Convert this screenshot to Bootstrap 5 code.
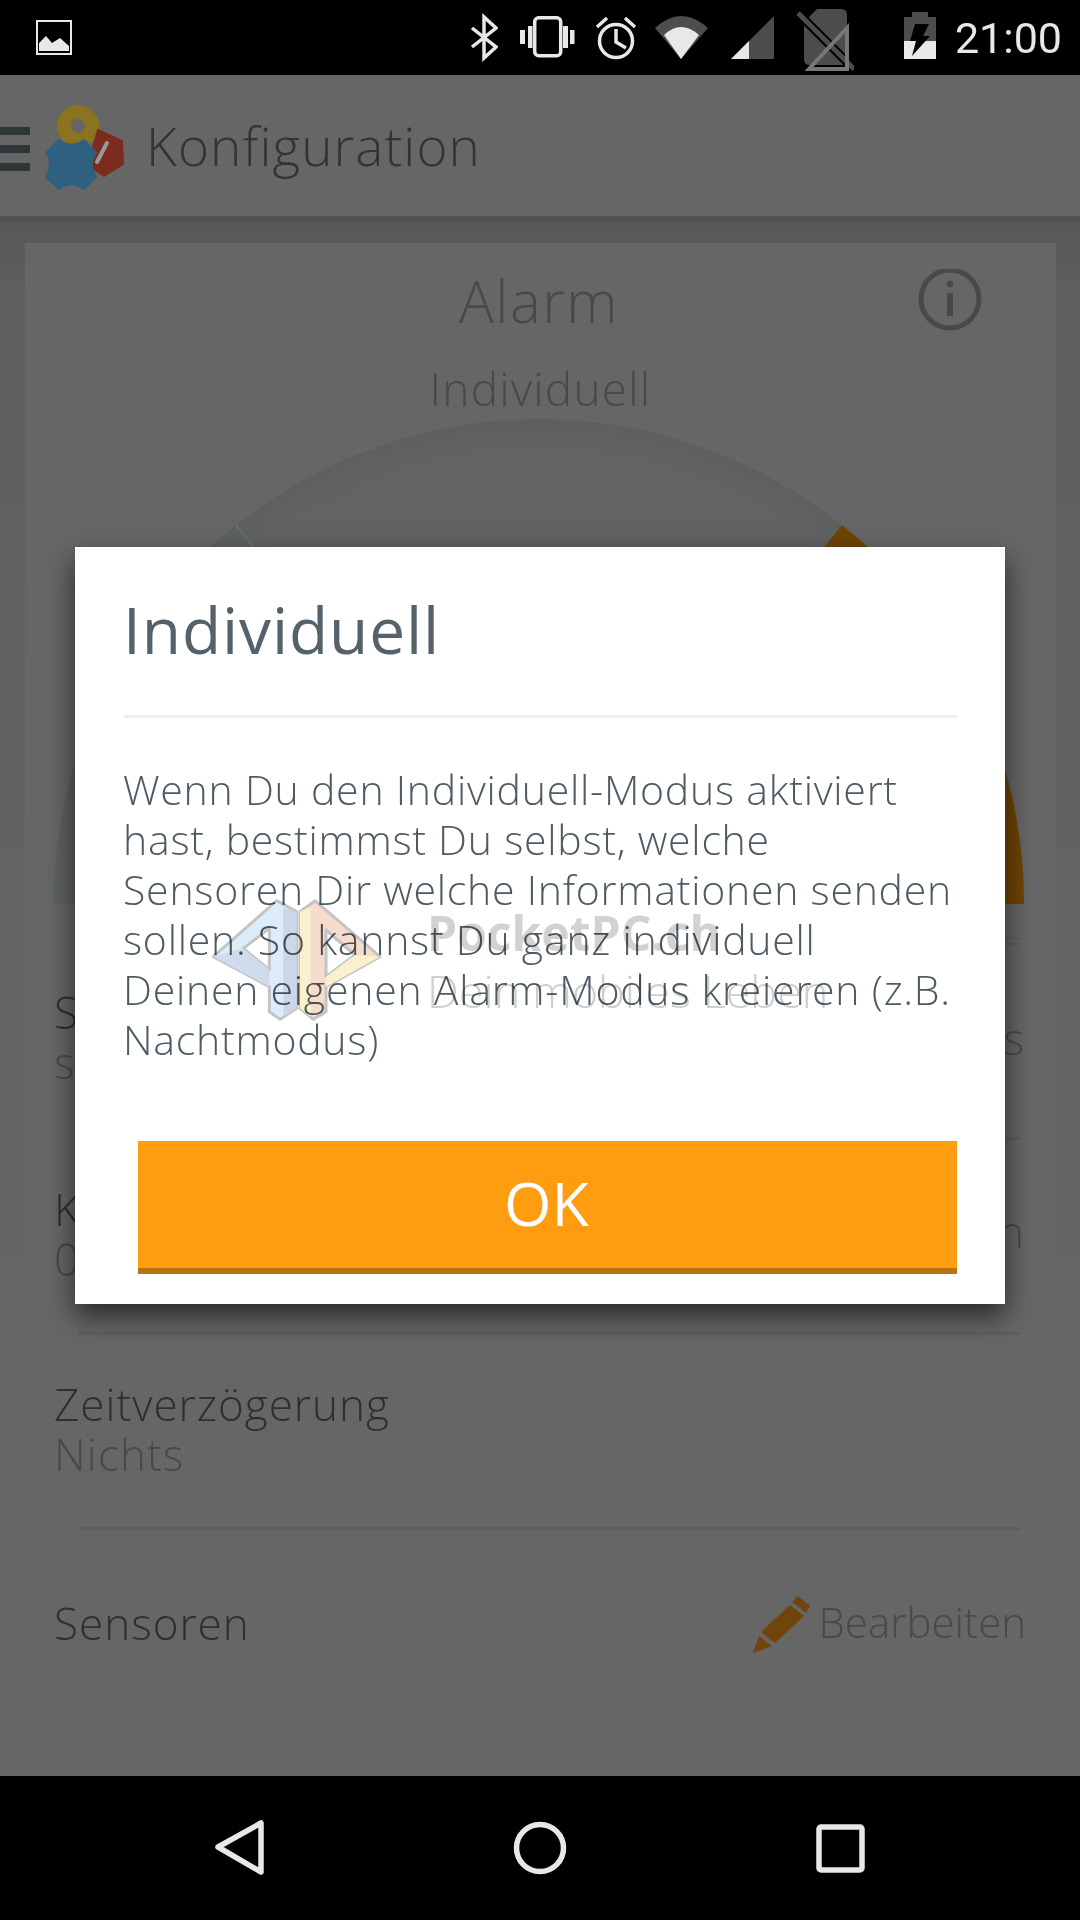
<!DOCTYPE html>
<html lang="de">
<head>
  <meta charset="UTF-8">
  <title>Konfiguration</title>
  <link href="https://cdn.jsdelivr.net/npm/bootstrap@5.3.3/dist/css/bootstrap.min.css" rel="stylesheet">
  <style>
    body {
      width: 1080px;
      height: 1920px;
      overflow: hidden;
      background: #000;
      font-family: "Open Sans", "Liberation Sans", sans-serif;
      font-weight: 300;
    }
    .status-strip { height: 75px; background: #000; padding-left: 35px; padding-right: 18px; }
    .status-clock { font-family: "Roboto", sans-serif; font-size: 43px; font-weight: 400; color: #e8e8e8; margin-left: 19px; line-height: 77px; }
    .app-top { height: 141px; background: #666; color: #2f3538; box-shadow: 0 6px 0 #535353; position: relative; z-index: 1; }
    .app-title { font-size: 53px; letter-spacing: 1.1px; margin-left: 21px; line-height: 1; }
    .page-area { height: 1560px; background: linear-gradient(#575757, #5f5f5f 80px, #636363 700px, #666 1400px); padding: 27px 24px 0 25px; overflow: hidden; }
    .alarm-sheet { background: #666; height: 1360px; padding: 0 32px 0 29px; }
    .alarm-head { padding-top: 22px; height: 110px; margin-right: 42px; margin-left: 42px; color: #454a4e; }
    .alarm-name { font-size: 58px; letter-spacing: 1.5px; line-height: 72px; }
    .alarm-spacer { width: 64px; }
    .alarm-mode { font-size: 46px; letter-spacing: 1.2px; line-height: 70px; padding-left: 3px; text-align: center; color: #454a4e; height: 65px; }
    .gauge-wrap { display: block; width: 970px; height: 486px; }
    .double-rule { height: 8px; border-top: 2px solid #5e5e5e; border-bottom: 2px solid #5e5e5e; margin: 33px 4px 0 24px; }
    .set-row { height: 192px; padding-top: 43px; color: #2c2f33; }
    .set-row.first-row { padding-top: 41px; }
    .set-row.last-row { padding-top: 60px; }
    .set-label { font-size: 44px; letter-spacing: 1px; line-height: 52px; }
    .set-value { font-size: 44px; letter-spacing: 1.1px; line-height: 48px; color: #454a4e; }
    .set-right { font-size: 44px; color: #454a4e; line-height: 52px; margin-top: 24px; }
    .first-row .set-right { margin-top: 26px; }
    .second-row .set-right { margin-top: 22px; }
    .last-row .set-label { margin-top: 7px; }
    .pen-icon { margin-top: 6px; }
    .edit-wrap { margin-right: -2px; }
    .row-rule { height: 3px; background: #5d5e5e; margin: 0 4px 0 24px; }
    .edit-link { color: #454a4e; font-size: 42px; line-height: 52px; }
    .nav-strip { height: 144px; background: #000; }
    .dlg-box { position: absolute; left: 75px; top: 547px; width: 930px; height: 757px; background: #fff; border-radius: 0; border: 0; box-shadow: 0 12px 26px rgba(0,0,0,.6); color: #4f5b63; z-index: 2; }
    .dlg-head { margin: 0 48px 0 49px; height: 171px; padding: 0; border-bottom: 3px solid #eee; border-radius: 0; align-items: flex-start; }
    .dlg-title { font-size: 64px; letter-spacing: .9px; font-weight: 400; line-height: 76px; padding-top: 45px; margin-left: -1px; color: #56626a; }
    .dlg-text { padding: 46px 40px 0 48px; font-size: 41px; letter-spacing: .75px; line-height: 50px; flex: none; height: 423px; white-space: nowrap; }
    .dlg-ok { display: block; margin: 0 48px 0 63px; width: 819px; height: 133px; border: 0; border-bottom: 6px solid #b87410; border-radius: 0; background: #ff9c10; color: #fff; font-size: 61px; font-weight: 400; line-height: 1; padding: 0 2px 4px 0; }
    .dlg-ok:hover, .dlg-ok:active { background: #ff9c10; color: #fff; }
    .mark-logo { position: absolute; left: 200px; top: 880px; z-index: 3; mix-blend-mode: multiply; }
    .mark-text { position: absolute; left: 427px; top: 898px; z-index: 3; mix-blend-mode: multiply; }
    .mark-name { font-weight: 700; font-size: 48px; line-height: 70px; color: #d2d2d2; }
    .mark-line { font-size: 45px; font-weight: 300; line-height: 50px; margin-top: -2px; color: #cfcfcf; }
  </style>
</head>
<body class="position-relative">

<!-- status bar, svg coords are screen coords -->
<div class="status-strip d-flex align-items-start">
  <svg width="38" height="75" viewBox="35 0 38 75">
    <rect x="37" y="21" width="34" height="33" fill="none" stroke="#e8e8e8" stroke-width="2"/>
    <path d="M39 51V43L46 36L52 43L60 38L69 46V51Z" fill="#e8e8e8"/>
  </svg>
  <div class="flex-grow-1"></div>
  <svg width="28" height="75" viewBox="471 0 28 75" fill="none" stroke="#e8e8e8" stroke-width="3.5">
    <path d="M473 28L497 47L485 58V17L497 28L473 47"/>
  </svg>
  <svg width="77" height="75" viewBox="499 0 77 75" fill="#e8e8e8">
    <rect x="535.7" y="17.7" width="26" height="38" rx="4" fill="none" stroke="#e8e8e8" stroke-width="3.5"/>
    <rect x="521" y="30" width="5" height="14"/><rect x="529" y="26" width="4.5" height="22"/>
    <rect x="564" y="26" width="5" height="22"/><rect x="571" y="30" width="4.5" height="14"/>
  </svg>
  <svg width="63" height="75" viewBox="576 0 63 75" fill="none" stroke="#e8e8e8" stroke-width="3.5">
    <circle cx="617" cy="41" r="16.5"/>
    <path d="M617 29V42L627 48M598 27L608 18M636 27L626 18"/>
  </svg>
  <svg width="70" height="75" viewBox="639 0 70 75">
    <path d="M682 59L656 28Q682 4 709 28Z" fill="#4d4d4d"/>
    <path d="M682 59L665 35Q682 19 700 35Z" fill="#e8e8e8"/>
  </svg>
  <svg width="66" height="75" viewBox="709 0 66 75">
    <path d="M775 16V59H732Z" fill="#4d4d4d"/>
    <path d="M750 41V59H732Z" fill="#e8e8e8"/>
  </svg>
  <svg width="80" height="75" viewBox="775 0 80 75">
    <path d="M818 9H842Q848 9 848 15V59Q848 65 842 65H811Q805 65 805 59V22Z" fill="#4d4d4d"/>
    <path d="M799 13L855 69" stroke="#000" stroke-width="9"/>
    <path d="M799 13L855 69" stroke="#4d4d4d" stroke-width="5"/>
    <path d="M848 28V69H810Z" fill="none" stroke="#777" stroke-width="4"/>
  </svg>
  <svg width="82" height="75" viewBox="855 0 82 75">
    <rect x="913" y="12" width="16" height="6" fill="#4d4d4d"/>
    <rect x="905" y="17" width="32" height="24" fill="#4d4d4d"/>
    <rect x="905" y="41" width="32" height="18" fill="#e8e8e8"/>
    <path d="M916 24H930L924 36H931L913 56L917 41H911Z" fill="#000"/>
  </svg>
  <span class="status-clock">21:00</span>
</div>

<!-- app bar -->
<div class="app-top d-flex align-items-center">
  <svg width="125" height="141" viewBox="0 75 125 141">
    <g fill="#2f3638"><rect x="0" y="127" width="30" height="8"/><rect x="0" y="145" width="30" height="8"/><rect x="0" y="163" width="30" height="8"/></g>
    <circle cx="78" cy="126" r="14" fill="none" stroke="#8a7420" stroke-width="14"/>
    <path d="M98 130L122 141L123 164L104 176L88 165Z" fill="#7c2c1c" stroke="#7c2c1c" stroke-width="2" stroke-linejoin="round"/>
    <path d="M107 143L97 162" stroke="#999" stroke-width="4" stroke-linecap="round"/>
    <path d="M59 140Q71 149 84 140L96 153Q88 164 96 177L84 189Q71 180 59 189L46 177Q54 164 46 153Z" fill="#2e6080" stroke="#2e6080" stroke-width="2" stroke-linejoin="round"/>
  </svg>
  <span class="app-title">Konfiguration</span>
</div>

<!-- page behind the dialog -->
<div class="page-area">
  <div class="alarm-sheet">
    <div class="alarm-head d-flex justify-content-between align-items-start">
      <div class="alarm-spacer"></div>
      <div class="alarm-name">Alarm</div>
      <svg class="mt-1" width="64" height="64" viewBox="0 0 64 64">
        <circle cx="32" cy="30" r="29" fill="none" stroke="#454a4e" stroke-width="5"/>
        <circle cx="32" cy="15" r="3.5" fill="#454a4e"/>
        <rect x="29" y="24" width="6" height="23" fill="#454a4e"/>
      </svg>
    </div>
    <div class="alarm-mode">Individuell</div>

    <svg class="gauge-wrap" viewBox="54 418 970 486">
      <defs>
        <radialGradient id="dialFill" gradientUnits="userSpaceOnUse" cx="539" cy="904" r="485">
          <stop offset="0.92" stop-color="#636363"/>
          <stop offset="1" stop-color="#5e6060"/>
        </radialGradient>
      </defs>
      <path d="M54 904A485 485 0 0 1 1024 904Z" fill="url(#dialFill)"/>
      <path d="M539 904L236 525A485 485 0 0 0 54 904Z" fill="#5e6161"/>
      <path d="M539 904L236 525" stroke="#6c6f6f" stroke-width="2"/>
      <path d="M539 904L842 525A485 485 0 0 1 1024 904Z" fill="#6f4404"/>
    </svg>

    <div class="double-rule"></div>
    <div class="set-row first-row d-flex justify-content-between">
      <div><div class="set-label">S</div><div class="set-value">s</div></div>
      <div class="set-right">s</div>
    </div>
    <div class="row-rule"></div>
    <div class="set-row second-row d-flex justify-content-between">
      <div><div class="set-label">K</div><div class="set-value">0</div></div>
      <div class="set-right">n</div>
    </div>
    <div class="row-rule"></div>
    <div class="set-row d-flex justify-content-between">
      <div><div class="set-label">Zeitverzögerung</div><div class="set-value">Nichts</div></div>
    </div>
    <div class="row-rule"></div>
    <div class="set-row last-row d-flex justify-content-between align-items-start">
      <div class="set-label">Sensoren</div>
      <div class="edit-wrap d-flex align-items-center gap-2">
        <svg class="pen-icon" width="58" height="58" viewBox="754 1596 58 58">
          <path d="M799 1596L811 1606L807 1613L793 1602Z" fill="#70440a"/>
          <path d="M791 1605L805 1616L776 1643L762 1632Z" fill="#70440a"/>
          <path d="M760 1636L773 1646L754 1653Z" fill="#70440a"/>
        </svg>
        <span class="edit-link">Bearbeiten</span>
      </div>
    </div>
  </div>
</div>

<!-- nav bar -->
<div class="nav-strip d-flex justify-content-between">
  <svg width="1080" height="144" viewBox="0 1776 1080 144" fill="none" stroke="#e8e8e8" stroke-width="5.5" stroke-linejoin="round">
    <path d="M261 1823V1872L218 1847Z"/>
    <circle cx="540" cy="1848" r="23.5"/>
    <rect x="819" y="1827" width="43" height="43" rx="2"/>
  </svg>
</div>

<!-- info dialog -->
<div class="modal-content dlg-box">
  <div class="modal-header dlg-head">
    <h5 class="modal-title dlg-title">Individuell</h5>
  </div>
  <div class="modal-body dlg-text">Wenn Du den Individuell-Modus aktiviert<br>hast, bestimmst Du selbst, welche<br>Sensoren Dir welche Informationen senden<br>sollen. So kannst Du ganz individuell<br>Deinen eigenen Alarm-Modus kreieren (z.B.<br>Nachtmodus)</div>
  <button type="button" class="btn dlg-ok">OK</button>
</div>

<!-- watermark on top of the screenshot -->
<svg class="mark-logo" width="220" height="150" viewBox="0 0 660 450" stroke="#c4c4c4" stroke-width="9" stroke-linejoin="round">
  <path fill-rule="evenodd" d="M230 62L290 95V385L240 418L208 395V320L40 230ZM130 205L208 270V145Z" fill="#dcecf8"/>
  <path d="M40 230L130 205L208 270V320Z" fill="#d0dcec" stroke="none"/>
  <path d="M250 85L290 95V385L250 410Z" fill="#ccd6e8" stroke="none"/>
  <path fill-rule="evenodd" d="M345 62L300 95V385L340 418L378 395V320L540 230ZM465 225L378 150V290Z" fill="#f6dccc"/>
  <path d="M540 230L465 225L378 290V320Z" fill="#fbf0cc" stroke="none"/>
  <path d="M300 95L332 80V410L300 385Z" fill="#fbf0cc" stroke="none"/>
</svg>
<div class="mark-text">
  <div class="mark-name">PocketPC.ch</div>
  <div class="mark-line">Dein mobiles Leben</div>
</div>

<script src="https://cdn.jsdelivr.net/npm/bootstrap@5.3.3/dist/js/bootstrap.bundle.min.js"></script>
</body>
</html>
